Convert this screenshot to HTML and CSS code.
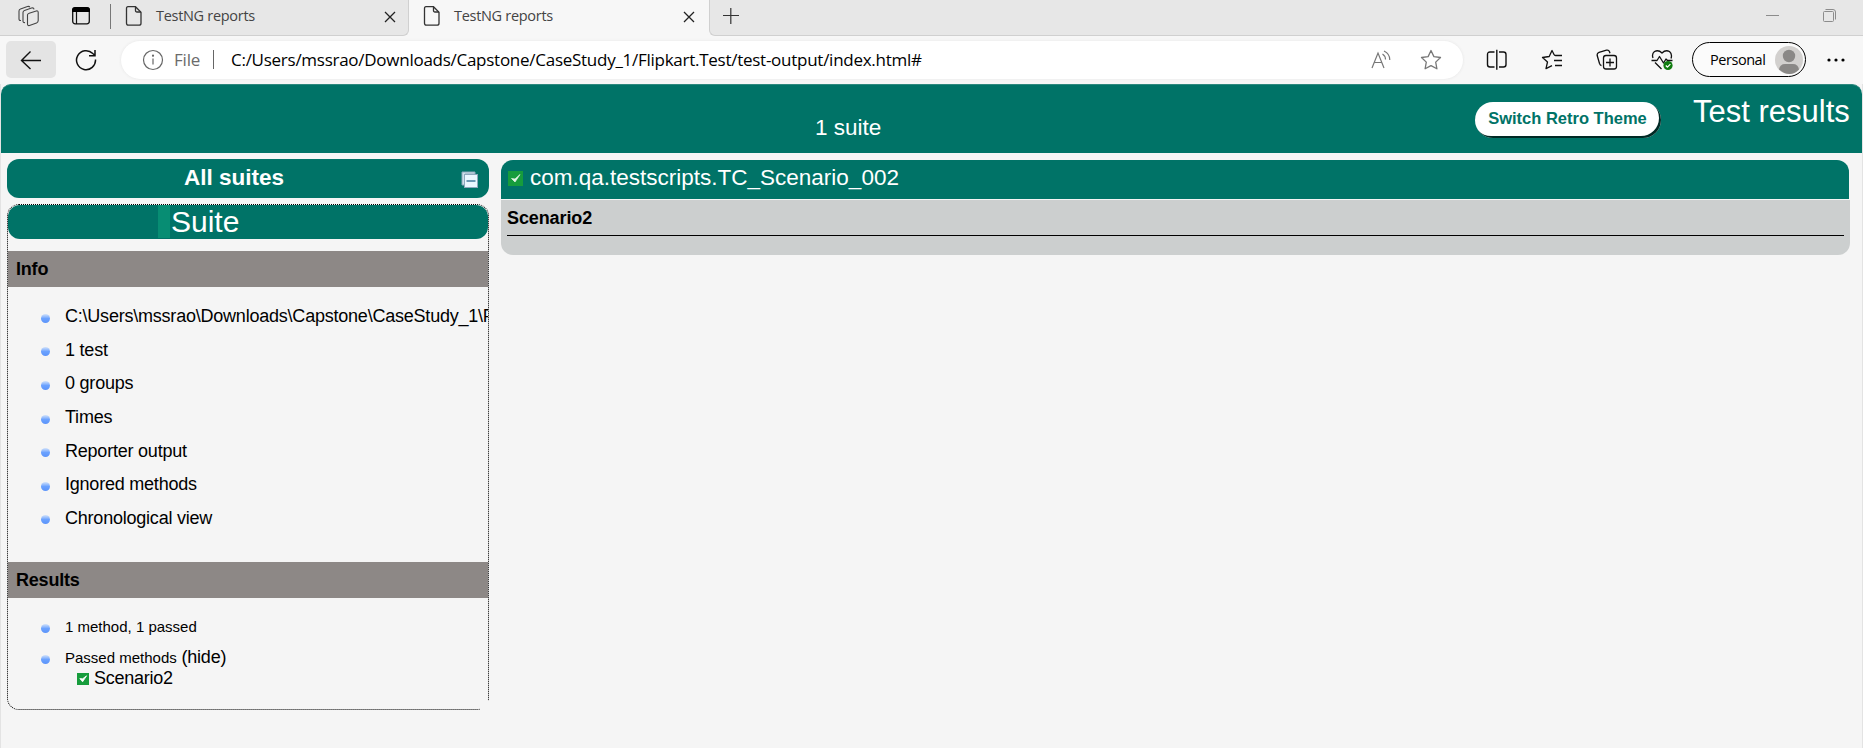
FILE: index.html
```html
<!DOCTYPE html>
<html lang="en">
<head>
<meta charset="utf-8">
<title>TestNG reports</title>
<link rel="stylesheet" href="styles.css">
</head>
<body>
<div class="tabs">
  <div class="tools">
    <svg class="workspaces" width="24" height="24" viewBox="0 0 24 24" fill="none" stroke="#444" stroke-width="1.100"><path d="M10.500 9.800V19q0 2 2 1.500l7-2.500q1.700-.7 1.700-2.500V7.500q0-2-2-1.500l-7 2.200q-1.700.6-1.700 1.600z"/><path d="M8 17.500q-2 .5-2-1.500V7.500q0-1.500 1.500-2l7-2.500q2-.6 2.500 1.300"/><path d="M4 15.500q-2 .3-2-1.500V6q0-1.500 1.500-2l7-2.500q1.800-.5 2.300.8"/></svg>
    <svg class="actions" width="20" height="20" viewBox="0 0 20 20"><rect x="1.700" y="2" width="16.600" height="15.800" rx="2.500" fill="none" stroke="#111" stroke-width="1.300"/><path d="M1 6V4q0-3 3-3h12q3 0 3 3v2z" fill="#000"/><path d="M5.500 6v12" stroke="#111" stroke-width="1.200"/></svg>
    <i class="bar"></i>
  </div>
  <div class="tab">
    <svg class="doc" width="18" height="22" viewBox="0 0 18 22" fill="none" stroke="#333" stroke-width="1.300"><path d="M3 1.700h7.500l5.500 5.500v11q0 2-2 2H3.500q-2 0-2-2V3.500q0-1.800 1.500-1.800z"/><path d="M10.500 2v3.500q0 1.500 1.500 1.500h4"/></svg>
    <span class="tabname">TestNG reports</span>
    <svg class="close" width="12" height="12" viewBox="0 0 12 12" stroke="#222" stroke-width="1.300"><path d="M1 1l10 10M11 1L1 11"/></svg>
  </div>
  <div class="tab active">
    <svg class="doc" width="18" height="22" viewBox="0 0 18 22" fill="none" stroke="#333" stroke-width="1.300"><path d="M3 1.700h7.500l5.500 5.500v11q0 2-2 2H3.500q-2 0-2-2V3.500q0-1.800 1.500-1.800z"/><path d="M10.500 2v3.500q0 1.500 1.500 1.500h4"/></svg>
    <span class="tabname">TestNG reports</span>
    <svg class="close" width="12" height="12" viewBox="0 0 12 12" stroke="#222" stroke-width="1.300"><path d="M1 1l10 10M11 1L1 11"/></svg>
  </div>
  <div class="rest">
    <svg class="plus" width="18" height="18" viewBox="0 0 18 18" stroke="#333" stroke-width="1.200"><path d="M1 8.500h16M8.800 1v16"/></svg>
    <svg class="window" width="72" height="16" viewBox="0 0 72 16" fill="none" stroke="#8c8c8c"><path d="M1 7.500h13"/><rect x="58.500" y="3.500" width="10" height="10" rx="1"/><path d="M60.500 1.500H68q2.500 0 2.500 2.500v7.500"/></svg>
  </div>
</div>
<div class="toolbar">
  <div class="back"><svg width="22" height="20" viewBox="0 0 22 20" fill="none" stroke="#111" stroke-width="1.400"><path d="M21 10.500H1.500M10.500 1.500l-9 9 9 8.500"/></svg></div>
  <svg class="reload" width="22" height="22" viewBox="0 0 22 22" fill="none" stroke="#111" stroke-width="1.500"><path d="M20.500 10.500A9.500 9.500 0 1 1 17.800 4.500L20 6.500M20 1v5.700h-6"/></svg>
  <div class="address">
    <svg class="info" width="22" height="22" viewBox="0 0 22 22" fill="none" stroke="#666" stroke-width="1.200"><circle cx="11" cy="11" r="9.500"/><path d="M11 9.500V15.500"/><circle cx="11" cy="6.700" r=".5" fill="#666"/></svg>
    <span class="file">File</span><i class="sep"></i>
    <span class="url">C:/Users/mssrao/Downloads/Capstone/CaseStudy_1/Flipkart.Test/test-output/index.html#</span>
    <svg class="read" width="22" height="20" viewBox="0 0 22 20" fill="none" stroke="#777" stroke-width="1.200"><path d="M1 18L7 3l6 15M3.200 12.500h7.700M11.500 4q3 2 3 5.500M13 1q6 3 5.800 9"/></svg>
    <svg class="star" width="22" height="22" viewBox="0 0 22 22" fill="none" stroke="#777" stroke-width="1.300" stroke-linejoin="round"><path d="M11 1.500l2.900 6.100 6.600.9-4.800 4.600 1.200 6.700-5.900-3.200-5.900 3.200 1.200-6.700-4.800-4.600 6.600-.9z"/></svg>
  </div>
  <div class="buttons">
    <svg width="22" height="22" viewBox="0 0 22 22" fill="none" stroke="#111" stroke-width="1.400"><path d="M8.500 3H4Q1.500 3 1.500 5.500v10Q1.500 18 4 18h4.500M13 3h4.500Q20 3 20 5.500v10q0 2.500-2.500 2.500H13M10.800.8v20"/></svg>
    <svg width="22" height="22" viewBox="0 0 22 22" fill="none" stroke="#111" stroke-width="1.300" stroke-linejoin="round"><path d="M21 6.500h-6.500q-1 0-1.500-1L11 1.500 8.200 7.500l-6.700 1 5 4.500-1.500 6.700 6-3M13 11.500h8M14 16.500h7"/></svg>
    <svg width="22" height="22" viewBox="0 0 22 22" fill="none" stroke="#111" stroke-width="1.300"><rect x="7.500" y="6.500" width="13" height="13.500" rx="2.500"/><path d="M14 9.500v8M10 13.500h8M5.500 16.500q-1.300 0-2-2L1.200 6.500Q.8 4 3 3.300l7.500-2.100q2.300-.5 3 1.500l.5 1.500"/></svg>
    <svg width="22" height="22" viewBox="0 0 22 22" fill="none" stroke="#111" stroke-width="1.300" stroke-linejoin="round"><path d="M2 9q-1.500-4 1.500-6.500Q7.500.5 11 4q3.500-3.500 7.500-1.500Q21.500 5 20 9.500M.5 11.500H6l2.500-4 4 6.500 2.500-4 1.500 1.500h5M4 13.500l6.500 6.500"/><circle cx="17" cy="16.500" r="4.600" fill="#107c10" stroke="none"/><path d="M14.800 16.500l1.600 1.600 3-3" stroke="#fff"/></svg>
  </div>
  <div class="profile"><span class="pname">Personal</span><svg width="28" height="28" viewBox="0 0 28 28"><circle cx="14" cy="14" r="14" fill="#d2d0ce"/><circle cx="14" cy="10" r="6.200" fill="#8a8886"/><path d="M4 23.500q1-5.500 6-5.500h8q5 0 6 5.500-9 9-20 0z" fill="#8a8886"/></svg></div>
  <svg class="more" width="18" height="4" viewBox="0 0 18 4"><circle cx="2" cy="2" r="1.600"/><circle cx="9" cy="2" r="1.600"/><circle cx="16" cy="2" r="1.600"/></svg>
</div>
<div class="page">
  <header class="banner">
    <span class="count">1 suite</span>
    <button class="switch">Switch Retro Theme</button>
    <span class="title">Test results</span>
  </header>
  <main class="content">
    <nav class="nav">
      <div class="all"><span class="allname">All suites</span>
        <svg class="collapse" width="17" height="17" viewBox="0 0 17 17"><path d="M1 1h13v2H4v11H1z" fill="#cfe0ea" stroke="#8da9bd"/><rect x="3.500" y="3.500" width="13" height="13" fill="#eaf8ff" stroke="#8da9bd"/><path d="M5.500 10h9" stroke="#427b9d" stroke-width="1.500"/></svg>
      </div>
      <section class="suite">
        <div class="suitehead"><i class="mark"></i><span class="suitename">Suite</span></div>
        <h2 class="heading">Info</h2>
        <ul class="list">
          <li><span class="path">C:\Users\mssrao\Downloads\Capstone\CaseStudy_1\Flipkart.Test\testng.xml</span></li>
          <li><span>1 test</span></li>
          <li><span>0 groups</span></li>
          <li><span>Times</span></li>
          <li><span>Reporter output</span></li>
          <li><span>Ignored methods</span></li>
          <li><span>Chronological view</span></li>
        </ul>
        <h2 class="heading">Results</h2>
        <ul class="list results">
          <li><span class="small">1 method, 1 passed</span></li>
          <li><span class="small">Passed methods</span>&nbsp;<span class="hide">(hide)</span></li>
        </ul>
        <div class="method"><svg width="12" height="12" viewBox="0 0 15 15"><rect width="15" height="15" fill="#169c3c"/><path d="M3.500 7L7 11l5-7.500-5 3.800z" fill="#fff" stroke="#fff"/></svg><span>Scenario2</span></div>
      </section>
    </nav>
    <section class="panel">
      <div class="panelhead"><svg width="15" height="15" viewBox="0 0 15 15"><rect width="15" height="15" fill="#169c3c"/><path d="M3.500 7.500L7 11l5-7.500-5 4.500z" fill="#e4f5e6" stroke="#e4f5e6" stroke-width=".7"/></svg><span class="classname">com.qa.testscripts.TC_Scenario_002</span></div>
      <div class="panelbody"><div class="scenario">Scenario2</div></div>
    </section>
  </main>
</div>
</body>
</html>
```

FILE: styles.css
```css
* { box-sizing: border-box; }
body { margin: 0; height: 748px; overflow: hidden; background: #f5f5f5; font-family: "Liberation Sans", Arial, sans-serif; color: #000; }
svg { display: block; flex: none; }
span { white-space: nowrap; }

.tabs { display: flex; height: 36px; background: #f7f7f7; font: 15px/20px "Open Sans", sans-serif; color: #444; }
.tools { display: flex; width: 111px; background: #e7e7e7; border-bottom: 1px solid #d0d0d0; }
.workspaces { margin: 5px 0 0 17px; }
.actions { margin: 6px 0 0 30px; }
.bar { width: 1px; height: 25px; margin: 4px 0 0 19px; background: #777; }
.tab { display: flex; width: 298px; padding-left: 14px; background: #e7e7e7; border-right: 1px solid #d0d0d0; border-bottom: 1px solid #d0d0d0; border-radius: 0 0 6px 0; }
.tab.active { width: 300px; background: #f7f7f7; border: 0; }
.doc { margin-top: 5px; }
.tabname { width: 214px; margin: 6px 0 0 13px; font-size: 14.5px; letter-spacing: -.3px; }
.close { margin: 11px 12px 0 auto; }
.tab.active .close { margin-right: 14px; }
.rest { flex: 1; display: flex; background: #e7e7e7; border-left: 1px solid #d0d0d0; border-bottom: 1px solid #d0d0d0; border-radius: 0 0 0 6px; }
.plus { margin: 7px 0 0 12px; }
.window { margin: 8px 26px 0 auto; }

.toolbar { display: flex; align-items: center; height: 48px; padding: 0 0 1px 6px; background: #f7f7f7; font-family: "Open Sans", sans-serif; }
.back { width: 50px; height: 37px; padding: 9px 0 0 14px; background: #e4e4e4; border-radius: 5px; }
.reload { margin-left: 19px; }
.address { display: flex; align-items: center; width: 1342px; height: 38px; margin-left: 24px; padding-left: 21px; border-radius: 19px; background: #fff; box-shadow: 0 0 3px #e4e4e4; }
.file { width: 27px; margin-left: 10px; font-size: 17px; color: #6b6b6b; letter-spacing: -.2px; }
.sep { width: 1px; height: 19px; margin: 0 17px 0 12px; background: #666; }
.url { font-size: 17px; letter-spacing: -.265px; }
.read { margin-left: auto; margin-right: 27px; }
.star { margin-right: 21px; }
.buttons { display: flex; gap: 33px; margin-left: 23px; }
.profile { display: flex; align-items: center; width: 114px; height: 35px; margin-left: 19px; padding-left: 17px; border: 1px solid #000; border-radius: 18px; background: #fbfbfb; }
.pname { width: 65px; font-size: 14.5px; letter-spacing: -.45px; }
.more { margin-left: 21px; }

.page { height: 664px; border-left: 1px solid #e3e3e3; border-right: 1px solid #e3e3e3; }
.banner { display: flex; height: 69px; background: #007367; border-radius: 10px 10px 0 0; border-top: 1px solid #2e897f; color: #fff; }
.count { width: 660px; margin: 29px 0 0 814px; font-size: 22.500px; line-height: 28px; }
.switch { width: 186px; height: 36px; margin-top: 17px; padding: 0 1px 4px 0; border: 0; border-radius: 18px; background: #fff; color: #007367; box-shadow: inset -2px -2px #002a25; font: bold 16.500px "Liberation Sans", Arial, sans-serif; white-space: nowrap; }
.title { margin: 9px 0 0 32px; font-size: 31px; line-height: 35px; }

.content { display: flex; gap: 12px; padding: 6px 12px 0 6px; }
.nav { flex: none; width: 482px; }
.all { display: flex; height: 39px; border-radius: 12px; background: #007367; color: #fff; }
.allname { width: 277px; margin: 5px 0 0 177px; font-size: 22.500px; line-height: 28px; font-weight: bold; }
.collapse { margin-top: 12px; }
.suite { position: relative; height: 506px; margin-top: 6px; border: 1px dotted #000; border-radius: 12px; }
/* The frame stays open at its lower right corner. */
.suite::after { content: ""; position: absolute; right: -1px; bottom: -1px; width: 9px; height: 9px; background: #f5f5f5; }
.suitehead { display: flex; height: 34px; background: #007367; border-radius: 12px; color: #fff; }
.mark { width: 12px; height: 33px; margin-left: 150px; background: #078d73; }
.suitename { margin-left: 1px; font-size: 30px; line-height: 34px; }
.heading { height: 36px; margin: 12px 0 0; padding-left: 8px; background: #8d8886; font-size: 18px; line-height: 36px; letter-spacing: -.2px; }
.list { margin: 13px 0 0; padding: 0; list-style: none; font-size: 18px; letter-spacing: -.22px; }
.list li { display: flex; align-items: center; height: 33.600px; overflow: hidden; }
.list li::before { content: ""; flex: none; width: 9px; height: 9px; margin: 3px 15px 0 33px; border-radius: 50%; background: linear-gradient(#d5e4fa, #6ba2ff 50%, #5c94fa); }
.list + .heading { margin-top: 27px; }
.results { margin-top: 13px; }
.results li { height: 31px; }
.small { font-size: 15px; letter-spacing: 0; }
.method { display: flex; align-items: center; gap: 5px; height: 21px; margin: -5px 0 0 69px; font-size: 18px; letter-spacing: -.25px; }

.panel { flex: 1; margin-top: 1px; }
.panelhead { display: flex; height: 39px; margin-right: 1px; padding-left: 7px; background: #007367; border-radius: 12px 12px 0 0; color: #fff; }
.panelhead svg { margin-top: 11px; }
.classname { margin: 4px 0 0 7px; font-size: 22.500px; line-height: 28px; }
.panelbody { height: 55px; margin-top: 1px; padding: 0 6px; background: #cccfcf; border-radius: 0 0 12px 12px; }
.scenario { height: 36px; border-bottom: 1px solid #000; font-size: 18px; line-height: 36px; font-weight: bold; letter-spacing: -.1px; }
```
